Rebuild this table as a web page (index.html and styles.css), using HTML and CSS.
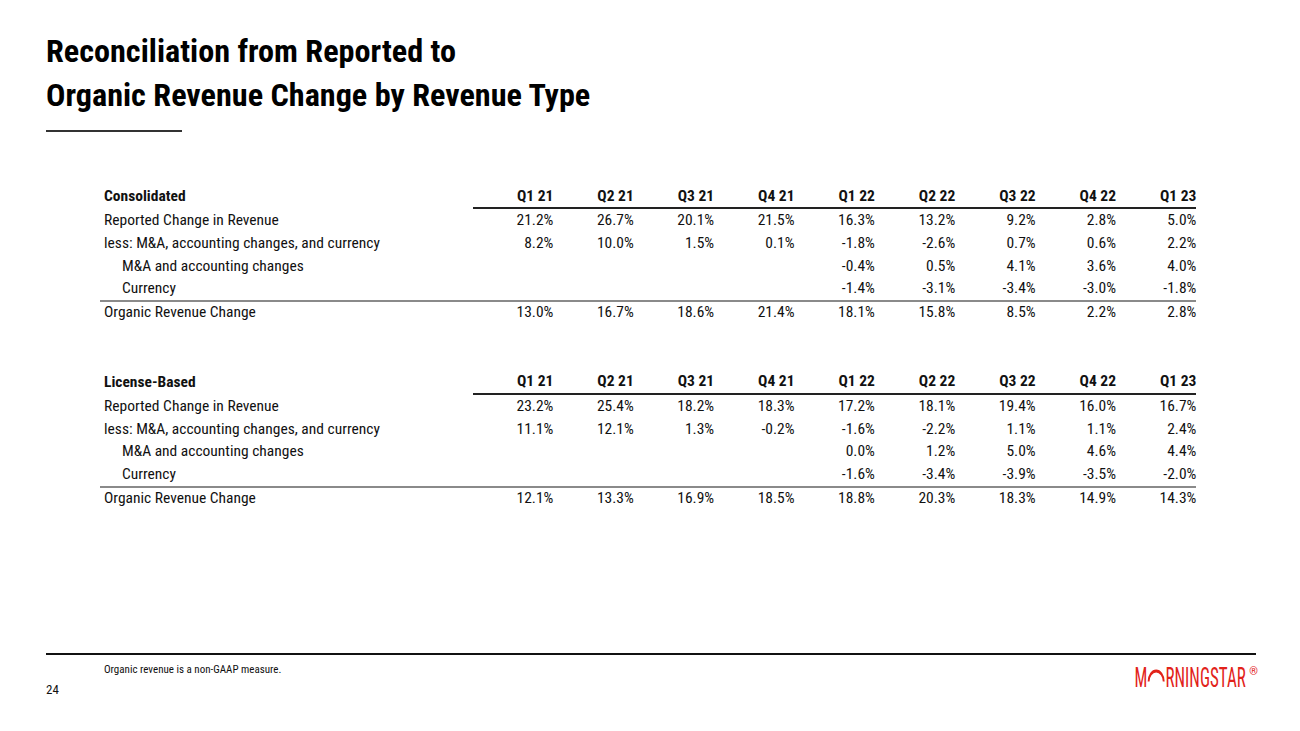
FILE: index.html
```html
<!DOCTYPE html>
<html>
<head>
<meta charset="utf-8">
<link rel="stylesheet" href="styles.css">
</head>
<body>
<div class="slide">
  <header class="head">
    <h1 class="title">Reconciliation from Reported to<br>Organic Revenue Change by Revenue Type</h1>
    <div class="title-rule"></div>
  </header>

  <main class="tables">
    <table class="recon">
      <colgroup><col class="c-label"><col span="9" class="c-num"></colgroup>
      <thead>
        <tr><th class="label">Consolidated</th><th>Q1 21</th><th>Q2 21</th><th>Q3 21</th><th>Q4 21</th><th>Q1 22</th><th>Q2 22</th><th>Q3 22</th><th>Q4 22</th><th>Q1 23</th></tr>
      </thead>
      <tbody>
        <tr><td class="label">Reported Change in Revenue</td><td>21.2%</td><td>26.7%</td><td>20.1%</td><td>21.5%</td><td>16.3%</td><td>13.2%</td><td>9.2%</td><td>2.8%</td><td>5.0%</td></tr>
        <tr><td class="label">less: M&amp;A, accounting changes, and currency</td><td>8.2%</td><td>10.0%</td><td>1.5%</td><td>0.1%</td><td>-1.8%</td><td>-2.6%</td><td>0.7%</td><td>0.6%</td><td>2.2%</td></tr>
        <tr><td class="label indent">M&amp;A and accounting changes</td><td></td><td></td><td></td><td></td><td>-0.4%</td><td>0.5%</td><td>4.1%</td><td>3.6%</td><td>4.0%</td></tr>
        <tr><td class="label indent">Currency</td><td></td><td></td><td></td><td></td><td>-1.4%</td><td>-3.1%</td><td>-3.4%</td><td>-3.0%</td><td>-1.8%</td></tr>
        <tr class="total"><td class="label">Organic Revenue Change</td><td>13.0%</td><td>16.7%</td><td>18.6%</td><td>21.4%</td><td>18.1%</td><td>15.8%</td><td>8.5%</td><td>2.2%</td><td>2.8%</td></tr>
      </tbody>
    </table>

    <table class="recon">
      <colgroup><col class="c-label"><col span="9" class="c-num"></colgroup>
      <thead>
        <tr><th class="label">License-Based</th><th>Q1 21</th><th>Q2 21</th><th>Q3 21</th><th>Q4 21</th><th>Q1 22</th><th>Q2 22</th><th>Q3 22</th><th>Q4 22</th><th>Q1 23</th></tr>
      </thead>
      <tbody>
        <tr><td class="label">Reported Change in Revenue</td><td>23.2%</td><td>25.4%</td><td>18.2%</td><td>18.3%</td><td>17.2%</td><td>18.1%</td><td>19.4%</td><td>16.0%</td><td>16.7%</td></tr>
        <tr><td class="label">less: M&amp;A, accounting changes, and currency</td><td>11.1%</td><td>12.1%</td><td>1.3%</td><td>-0.2%</td><td>-1.6%</td><td>-2.2%</td><td>1.1%</td><td>1.1%</td><td>2.4%</td></tr>
        <tr><td class="label indent">M&amp;A and accounting changes</td><td></td><td></td><td></td><td></td><td>0.0%</td><td>1.2%</td><td>5.0%</td><td>4.6%</td><td>4.4%</td></tr>
        <tr><td class="label indent">Currency</td><td></td><td></td><td></td><td></td><td>-1.6%</td><td>-3.4%</td><td>-3.9%</td><td>-3.5%</td><td>-2.0%</td></tr>
        <tr class="total"><td class="label">Organic Revenue Change</td><td>12.1%</td><td>13.3%</td><td>16.9%</td><td>18.5%</td><td>18.8%</td><td>20.3%</td><td>18.3%</td><td>14.9%</td><td>14.3%</td></tr>
      </tbody>
    </table>
  </main>

  <footer class="foot">
    <div class="foot-rule"></div>
    <div class="foot-body">
      <div class="foot-left">
        <p class="note">Organic revenue is a non-GAAP measure.</p>
        <p class="page">24</p>
      </div>
      <div class="logo">
        <div class="logo-word"><span>M</span><svg class="logo-o" width="29" height="19" viewBox="0 0 29 19"><path d="M2.5 12.5 A12 10.5 0 0 1 26.5 12.5" fill="none" stroke="#e2231a" stroke-width="3"/></svg><span>RNINGSTAR</span></div>
        <span class="reg">®</span>
      </div>
    </div>
  </footer>
</div>
</body>
</html>
```
FILE: styles.css
```css
html, body {
  margin: 0;
  padding: 0;
  background: #fff;
}
.slide {
  width: 1300px;
  height: 731px;
  box-sizing: border-box;
  padding: 29px 44px 0 46px;
  display: flex;
  flex-direction: column;
  font-family: Roboto, "DejaVu Sans", sans-serif;
  font-stretch: 75%;
  color: #111;
}
.title {
  margin: 0;
  font-size: 32.2px;
  line-height: 44px;
  font-weight: 700;
  color: #000;
}
.title-rule {
  width: 136px;
  height: 2px;
  background: #333;
  margin-top: 13px;
}
.tables {
  padding: 52px 0 0 54px;
  display: flex;
  flex-direction: column;
  gap: 46px;
}
.recon {
  border-collapse: collapse;
  table-layout: fixed;
  width: 1096px;
  font-size: 15.5px;
}
.c-label { width: 373px; }
.c-num { width: 80.375px; }
.recon th, .recon td {
  padding: 0;
  height: 22.7px;
  line-height: 22px;
  text-align: right;
  white-space: nowrap;
}
.recon th {
  font-weight: 700;
  border-bottom: 2px solid #222;
  height: 23px;
}
.recon th.label {
  border-bottom: none;
}
.recon .label {
  text-align: left;
  padding-left: 4px;
}
.recon .indent {
  padding-left: 22px;
}
.recon tr.total td {
  border-top: 2px solid #8a8a8a;
  height: 20px;
  line-height: 20px;
  padding-bottom: 2px;
}
.foot {
  margin-top: auto;
  padding-bottom: 33px;
}
.foot-rule {
  width: 1210px;
  height: 2px;
  background: #111;
}
.foot-body {
  display: flex;
  justify-content: space-between;
}
.foot-left {
  display: flex;
  flex-direction: column;
}
.note {
  margin: 8px 0 0 58px;
  font-size: 11px;
  line-height: 14px;
}
.page {
  margin: 5px 0 0 0;
  font-size: 13px;
  line-height: 16px;
}
.logo {
  display: flex;
  align-items: flex-start;
  margin: 13px -2px 0 0;
  color: #e2231a;
}
.logo-word {
  display: flex;
  align-items: flex-end;
  font-size: 27px;
  line-height: 20px;
  height: 20px;
  transform: scaleX(0.63);
  transform-origin: right center;
}
.reg {
  font-size: 11px;
  line-height: 11px;
  margin-left: 4px;
  margin-top: -2px;
}
```
